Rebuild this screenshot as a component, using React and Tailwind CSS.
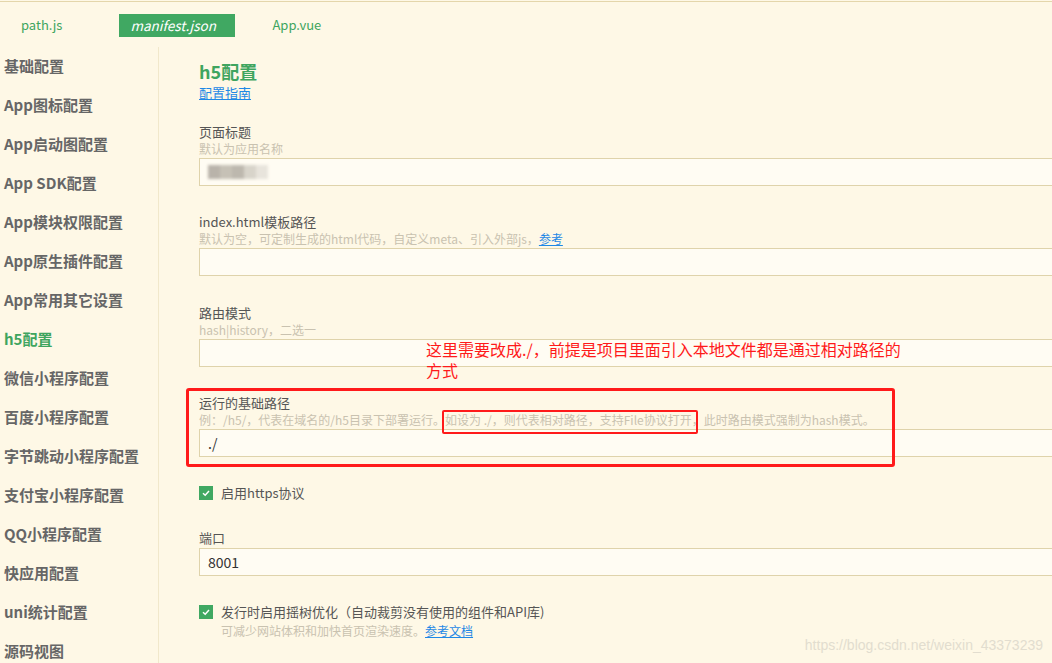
import React from 'react'

const items = [
    '基础配置',
    'App图标配置',
    'App启动图配置',
    'App SDK配置',
    'App模块权限配置',
    'App原生插件配置',
    'App常用其它设置',
    'h5配置',
    '微信小程序配置',
    '百度小程序配置',
    '字节跳动小程序配置',
    '支付宝小程序配置',
    'QQ小程序配置',
    '快应用配置',
    'uni统计配置',
    '源码视图',
]

function Check() {
    return (
        <span className="w-[14px] h-[14px] bg-[#40a862] flex items-center justify-center shrink-0">
            <svg width="10" height="10" viewBox="0 0 10 10" fill="none">
                <path d="M2 5.2 L4.2 7.2 L8 3" stroke="white" strokeWidth="1.5" />
            </svg>
        </span>
    )
}

function Field({ label, hint, value, children, className }) {
    return (
        <div className={className}>
            <div className="text-[13px] leading-[18px] text-[#555]">{label}</div>
            <div className="text-[12px] leading-[16px] text-[#c9c2b0] whitespace-nowrap">{hint}</div>
            <div className="mt-[1px] h-[28px] w-[900px] border border-[#dfd3ab] bg-[#fffcf3] flex items-center px-[8px] text-[14px] text-[#333]">
                {value}
                {children}
            </div>
        </div>
    )
}

export default function App() {
    return (
        <div className="w-[1052px] h-[663px] bg-[#fef8e6] overflow-hidden relative" style={{ fontFamily: '"Noto Sans CJK SC", "Noto Sans", sans-serif' }}>
            <div className="h-[2px] border-b border-[#e4d6ab]"></div>
            <div className="h-[45px] flex items-center text-[13px] text-[#3fa55f]">
                <span className="ml-[21px]">path.js</span>
                <span className="ml-[57px] mt-[1px] w-[116px] h-[23px] bg-[#40a862] text-white italic pl-[11px] flex items-center text-[13.5px]">manifest.json</span>
                <span className="ml-[37px]">App.vue</span>
            </div>
            <div className="flex h-[616px]">
                <div className="w-[159px] border-r border-[#f1e8cb] shrink-0">
                    {items.map((t) => (
                        <div key={t} className={'h-[39px] pl-[4px] flex items-center text-[15px] font-bold whitespace-nowrap ' + (t === 'h5配置' ? 'text-[#3fa55f]' : 'text-[#666]')}>
                            {t}
                        </div>
                    ))}
                </div>
                <div className="flex-1 pl-[40px] pt-[12px] relative">
                    <div className="text-[18px] leading-[24px] font-bold text-[#3fa55f]">h5配置</div>
                    <a className="mt-[1px] block text-[13px] leading-[18px] text-[#1e88e5] underline">配置指南</a>

                    <Field className="mt-[21px]" label="页面标题" hint="默认为应用名称">
                        <span className="flex blur-[1.5px]">
                            <span className="w-[12px] h-[14px] bg-[#b9b3aa]"></span>
                            <span className="w-[12px] h-[14px] bg-[#c6c1b6]"></span>
                            <span className="w-[12px] h-[14px] bg-[#bdb8ae]"></span>
                            <span className="w-[12px] h-[14px] bg-[#d8d4ca]"></span>
                            <span className="w-[12px] h-[14px] bg-[#e8e4dc]"></span>
                        </span>
                    </Field>

                    <Field
                        className="mt-[27px]"
                        label="index.html模板路径"
                        hint={<>默认为空，可定制生成的html代码，自定义meta、引入外部js，<a className="text-[#1e88e5] underline">参考</a></>}
                    />

                    <Field className="mt-[28px]" label="路由模式" hint="hash|history，二选一" />

                    <Field
                        className="mt-[27px]"
                        label="运行的基础路径"
                        hint="例：/h5/，代表在域名的/h5目录下部署运行。如设为 ./，则代表相对路径，支持File协议打开，此时路由模式强制为hash模式。"
                        value="./"
                    />

                    <div className="mt-[27px] flex items-center gap-[8px] h-[18px] text-[13px] text-[#555]">
                        <Check />
                        <span>启用https协议</span>
                    </div>

                    <Field className="mt-[27px]" label="端口" hint="" value="8001" />

                    <div className="mt-[27px] flex items-center gap-[8px] h-[18px] text-[13px] text-[#555] whitespace-nowrap">
                        <Check />
                        <span>发行时启用摇树优化（自动裁剪没有使用的组件和API库)</span>
                    </div>
                    <div className="mt-[2px] pl-[22px] text-[12px] leading-[16px] text-[#c9c2b0]">
                        可减少网站体积和加快首页渲染速度。<a className="text-[#1e88e5] underline">参考文档</a>
                    </div>

                    {/* annotations */}
                    <div className="absolute left-[267px] top-[292px] text-[16px] leading-[21px] text-[#ff1a1a] whitespace-nowrap">
                        这里需要改成./，前提是项目里面引入本地文件都是通过相对路径的<br />方式
                    </div>
                    <div className="absolute left-[27px] top-[341px] w-[709px] h-[79px] border-[3px] border-[#ff1a1a] rounded-[3px]"></div>
                    <div className="absolute left-[283px] top-[363px] w-[256px] h-[24px] border-2 border-[#ff1a1a] rounded-[2px]"></div>
                </div>
            </div>
            <div className="absolute right-[9px] top-[635px] text-[14px] text-[#e2ddcf]" style={{ fontFamily: '"Liberation Sans", Arial, sans-serif' }}>
                https://blog.csdn.net/weixin_43373239
            </div>
        </div>
    )
}
